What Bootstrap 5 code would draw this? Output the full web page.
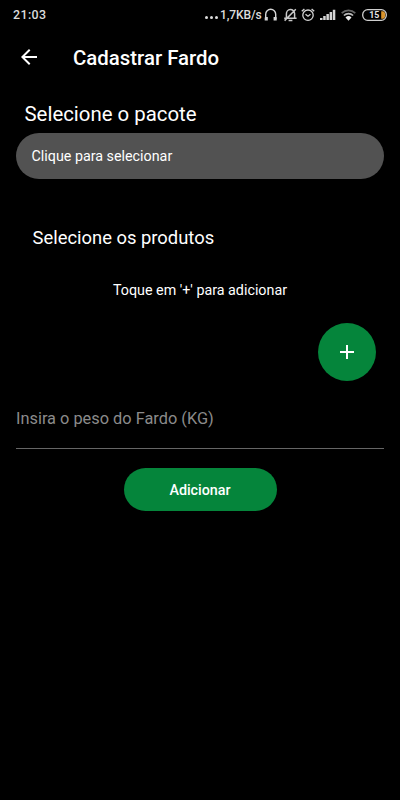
<!DOCTYPE html>
<html lang="pt-BR" data-bs-theme="dark">
<head>
<meta charset="utf-8">
<meta name="viewport" content="width=device-width, initial-scale=1">
<title>Cadastrar Fardo</title>
<link href="https://cdn.jsdelivr.net/npm/bootstrap@5.3.0/dist/css/bootstrap.min.css" rel="stylesheet">
<style>
  body { background: #000; color: #fff; font-family: Roboto, "Liberation Sans", sans-serif; min-height: 100vh; }
  svg { display: block; flex: none; }
  .status-bar { height: 29px; padding: 0 13px; color: #dcdcdc; font-size: 12px; font-weight: 500; }
  .clock, .net-speed { line-height: 18px; }
  .clock { letter-spacing: .4px; font-size: 12.4px; }
  .net-dots { gap: 2px; margin: 5px 2px 0 0; }
  .net-dots i { width: 3px; height: 3px; border-radius: 50%; background: #dcdcdc; }
  .net-speed { width: 44px; font-size: 12px; letter-spacing: -.1px; white-space: nowrap; }
  .app-bar { height: 56px; padding: 0 17px 0 16.5px; }
  .app-title { font-size: 20.4px; font-weight: 500; line-height: 24px; margin-left: 32.5px; padding-top: 1px; }
  .package-label { font-size: 20.4px; line-height: 24px; margin: 17px 0 7px 8.5px; }
  .btn-package { height: 46px; background: #525252; color: #fff; font-size: 14.3px; padding: 2px 15px 0 15.5px; }
  .products-label { font-size: 18.4px; line-height: 24px; margin: 47px 0 0 16.5px; }
  .hint { font-size: 14.3px; line-height: 20px; margin-top: 30px; }
  .btn-green { --bs-btn-bg: #05853b; --bs-btn-color: #fff; --bs-btn-hover-bg: #067735; --bs-btn-hover-color: #fff; border: 0; }
  .btn-add { width: 58px; height: 58px; margin: 23px 8px 0 0; }
  .weight-input, .weight-input:focus { height: 57px; margin-top: 11px; background: transparent; border: 0; border-bottom: 1px solid #666; border-radius: 0; padding: 0 0 4px; font-size: 16.35px; box-shadow: none; }
  .weight-input::placeholder { color: #8b8b8b; opacity: 1; }
  .btn-submit { width: 153px; height: 43px; margin-top: 19px; padding: 2px 0 0; font-size: 14.3px; font-weight: 500; }
</style>
</head>
<body>
<header>
  <div class="status-bar d-flex align-items-center">
    <span class="clock me-auto">21:03</span>
    <div class="net-dots d-flex"><i></i><i></i><i></i></div>
    <span class="net-speed">1,7KB/s</span>
    <div class="d-flex align-items-center">
      <svg width="14" height="14" viewBox="0 0 14 14" fill="none" stroke="#d4d4d4" stroke-width="1.4"><path d="M1.7 11V6.3a5 5 0 0 1 10 0V11"/><path d="M1 9h2.8v3.4H.7V10zM12.4 9H9.6v3.4h3.1V10z" fill="#d4d4d4" stroke="none"/></svg>
      <svg width="15" height="14" viewBox="0 0 15 14" fill="none" stroke="#c8c8c8" stroke-width="1.5" style="margin-left:5px"><path d="M3.4 9.8V6a4.1 4.2 0 0 1 8.2-.5v4.3M1.2 10.2h12.4M5.6 12.4h3.8M1.6 12.6 12.8 1.2"/></svg>
      <svg width="14" height="14" viewBox="0 0 14 14" fill="none" stroke="#d4d4d4" stroke-width="1.3" style="margin-left:3px"><circle cx="7" cy="7.2" r="5.2"/><path d="M4.5 6.2 7 8.2l2.5-2M.8 3.3 3.4 .9M13.2 3.3 10.6 .9"/></svg>
      <svg width="16" height="12" viewBox="0 0 16 12" fill="#d4d4d4" style="margin-left:5px"><path d="M0 9h2.5v2H0zM3.2 7h2.5v4H3.2zM6.4 5h2.5v6H6.4zM9.6 3h2.5v8H9.6zM12.8.7h2.5V11h-2.5z"/></svg>
      <svg width="15" height="12" viewBox="0 0 15 12" fill="none" stroke-width="1.7" style="margin-left:5px"><path d="M.7 4.1a9.8 9.8 0 0 1 13.6 0" stroke="#666"/><path d="M2.9 6.5a6.7 6.7 0 0 1 9.2 0" stroke="#bbb"/><path d="m7.5 11.7-3-3.2a4.4 4.4 0 0 1 6 0z" fill="#eee"/></svg>
      <svg width="25" height="12" viewBox="0 0 25 12" style="margin-left:6px"><rect x=".7" y=".7" width="23.6" height="10.6" rx="5" fill="none" stroke="#cfcfcf" stroke-width="1.3"/><path d="M19.2 2.3h1.5a2.5 3.7 0 0 1 0 7.4h-1.5z" fill="#d8932c"/><text x="12.3" y="9.1" text-anchor="middle" font-family="Roboto, sans-serif" font-size="8.8" font-weight="700" fill="#e5e5e5">15</text></svg>
    </div>
  </div>
  <nav class="app-bar d-flex align-items-center" aria-label="Navegação">
    <a href="#" class="text-white" aria-label="Voltar"><svg width="24" height="24" viewBox="0 0 24 24" fill="#fff"><path d="M20 11H7.83l5.59-5.59L12 4l-8 8 8 8 1.41-1.41L7.83 13H20z"/></svg></a>
    <h1 class="app-title mb-0">Cadastrar Fardo</h1>
  </nav>
</header>
<main class="px-3 d-flex flex-column">
  <div class="package-label">Selecione o pacote</div>
  <button type="button" class="btn btn-package rounded-pill border-0 text-start w-100">Clique para selecionar</button>
  <div class="products-label">Selecione os produtos</div>
  <p class="hint text-center mb-0">Toque em '+' para adicionar</p>
  <button type="button" class="btn btn-green btn-add rounded-circle p-0 d-flex align-items-center justify-content-center align-self-end" aria-label="Adicionar produto"><svg width="24" height="24" viewBox="0 0 24 24" fill="#fff"><path d="M19 13h-6v6h-2v-6H5v-2h6V5h2v6h6z"/></svg></button>
  <input type="text" class="form-control weight-input" placeholder="Insira o peso do Fardo (KG)">
  <button type="button" class="btn btn-green btn-submit rounded-pill align-self-center">Adicionar</button>
</main>
<script src="https://cdn.jsdelivr.net/npm/bootstrap@5.3.0/dist/js/bootstrap.bundle.min.js"></script>
</body>
</html>
